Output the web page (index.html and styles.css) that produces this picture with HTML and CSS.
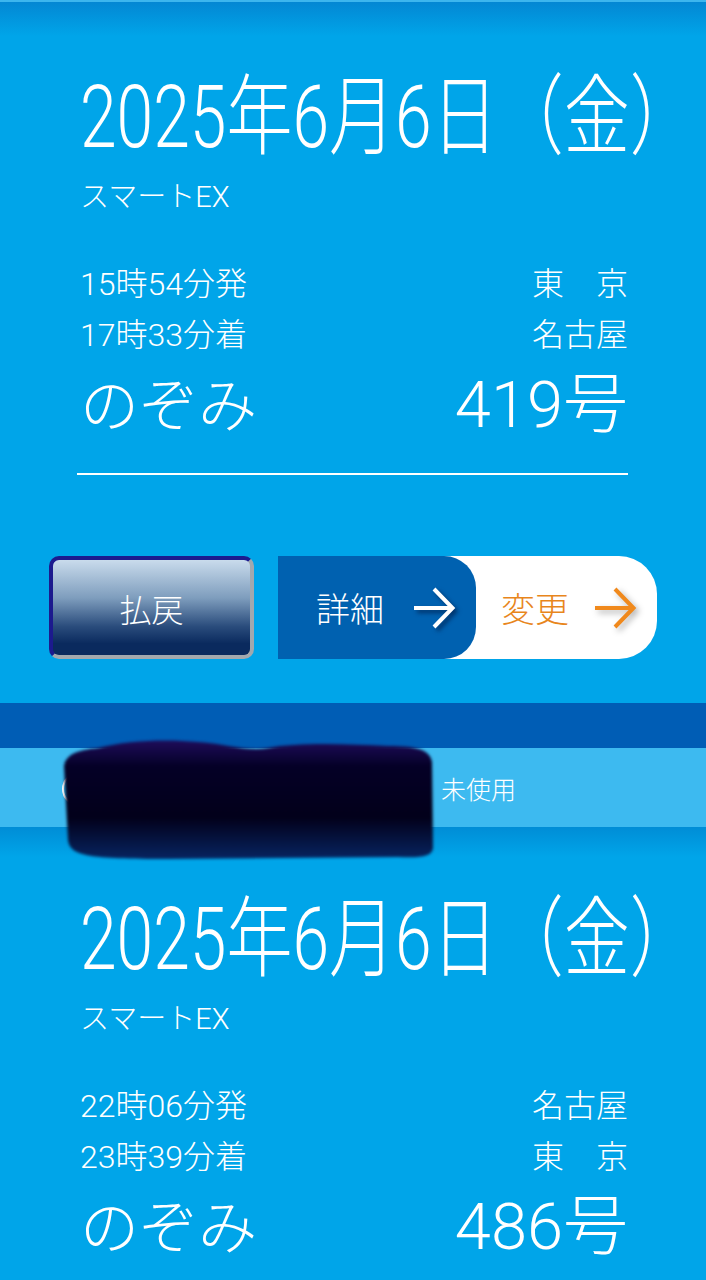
FILE: index.html
```html
<!DOCTYPE html>
<html lang="ja">
<head>
<meta charset="utf-8">
<title>スマートEX</title>
<link rel="stylesheet" href="styles.css">
</head>
<body>
<section class="ticket ticket-first">
  <div class="info">
    <div class="title">2025年6月6日（金）</div>
    <div class="sub">スマートEX</div>
    <div class="rows">
      <div class="row"><span>15時54分発</span><span>東　京</span></div>
      <div class="row"><span>17時33分着</span><span>名古屋</span></div>
    </div>
    <div class="row train"><span class="train-name">のぞみ</span><span>419号</span></div>
    <div class="rule"></div>
  </div>
  <div class="actions">
    <div class="refund">払戻</div>
    <div class="pill">
      <div class="detail"><span>詳細</span>
        <svg class="arrow arrow-white" width="44" height="46" viewBox="0 0 44 46"><path d="M2 23H40M22 4L40.5 23L22 42" fill="none" stroke="#fff" stroke-width="4"/></svg>
      </div>
      <div class="change"><span>変更</span>
        <svg class="arrow arrow-orange" width="44" height="46" viewBox="0 0 44 46"><path d="M2 23H40M22 4L40.5 23L22 42" fill="none" stroke="#f0891c" stroke-width="4"/></svg>
      </div>
    </div>
  </div>
</section>
<div class="band-dark"></div>
<div class="band-status">
  <div class="redacted">
    <span class="icon-ring"></span>
    <svg class="blob" width="380" height="124" viewBox="0 0 380 124">
      <defs>
        <linearGradient id="bg" x1="0" y1="0" x2="0" y2="1">
          <stop offset="0" stop-color="#1e0c5a"/>
          <stop offset="0.22" stop-color="#040026"/>
          <stop offset="0.65" stop-color="#02001a"/>
          <stop offset="1" stop-color="#072460"/>
        </linearGradient>
      </defs>
      <path d="M6 30C8 18 20 14 40 12C70 4 110 3 140 6C170 8 190 16 210 12C240 6 290 8 330 10C360 10 372 14 374 26L375 112C374 121 362 122 340 121L110 123C30 123 12 120 10 104Z" fill="url(#bg)"/>
    </svg>
  </div>
  <span class="status">未使用</span>
</div>
<section class="ticket ticket-second">
  <div class="info">
    <div class="title">2025年6月6日（金）</div>
    <div class="sub">スマートEX</div>
    <div class="rows">
      <div class="row"><span>22時06分発</span><span>名古屋</span></div>
      <div class="row"><span>23時39分着</span><span>東　京</span></div>
    </div>
    <div class="row train"><span class="train-name">のぞみ</span><span>486号</span></div>
  </div>
</section>
</body>
</html>
```
FILE: styles.css
```css
html, body {
  margin: 0;
  padding: 0;
}
body {
  width: 706px;
  height: 1280px;
  overflow: hidden;
  background: #00a5e9;
  color: #fff;
  font-family: Roboto, "Noto Sans CJK JP", sans-serif;
  font-weight: 300;
}
.ticket-first {
  border-top: 2px solid #3cb6ee;
  background: linear-gradient(#0387d3, #00a5e9 34px) no-repeat;
}
.ticket-first .info {
  padding: 72px 0 0 80px;
}
.ticket-second {
  background: linear-gradient(#008dd6, #00a5e9 30px) no-repeat;
}
.ticket-second .info {
  padding: 69px 0 0 80px;
}
.title {
  font-size: 66px;
  line-height: 88px;
  height: 88px;
  white-space: nowrap;
  transform: scaleY(1.333);
}
.sub {
  font-size: 29px;
  line-height: 28px;
  margin-top: 21px;
}
.rows {
  margin-top: 48px;
}
.row {
  display: flex;
  justify-content: space-between;
  align-items: baseline;
  margin-right: 78px;
  font-size: 32px;
  line-height: 51px;
  white-space: nowrap;
}
.train {
  font-size: 65px;
  line-height: 64px;
  margin-top: 12px;
}
.train-name {
  font-size: 59px;
}
.rule {
  height: 2px;
  background: #fff;
  margin: 34px 78px 0 -3px;
}
.actions {
  display: flex;
  height: 103px;
  margin-top: 81px;
  padding-left: 49px;
}
.refund {
  width: 205px;
  height: 103px;
  box-sizing: border-box;
  border: 4px solid;
  border-color: #1c1a8e #a2a8ae #a2a8ae #1c1a8e;
  border-radius: 10px;
  background: linear-gradient(#c9dbec, #7e9dbd 40%, #2a4c7c 70%, #0a2a5e 88%);
  display: flex;
  align-items: center;
  justify-content: center;
  font-size: 32px;
}
.pill {
  margin-left: 24px;
  width: 379px;
  display: flex;
  background: #fff;
  border-radius: 0 38px 38px 0;
}
.detail {
  width: 198px;
  box-sizing: border-box;
  background: #0061b0;
  border-radius: 0 32px 32px 0;
  display: flex;
  align-items: center;
  padding-left: 38px;
  font-size: 34px;
}
.detail .arrow {
  margin-left: 28px;
}
.change {
  display: flex;
  align-items: center;
  padding-left: 25px;
  color: #e8861c;
  font-size: 34px;
}
.change .arrow {
  margin-left: 24px;
}
.arrow-white {
  filter: drop-shadow(3px 3px 2px rgba(0, 20, 60, 0.6));
}
.arrow-orange {
  filter: drop-shadow(3px 3px 3px rgba(0, 0, 0, 0.3));
}
.band-dark {
  height: 45px;
  margin-top: 44px;
  background: #005db5;
}
.band-status {
  height: 79px;
  background: #3dbaf0;
  display: flex;
  align-items: center;
  padding-left: 62px;
  font-size: 25px;
}
.redacted {
  position: relative;
  width: 373px;
  height: 79px;
}
.icon-ring {
  position: absolute;
  left: 0;
  top: 24px;
  width: 30px;
  height: 30px;
  border: 2px solid #fff;
  border-radius: 50%;
}
.blob {
  position: absolute;
  left: -4px;
  top: -12px;
  filter: blur(1.5px);
}
.status {
  margin-left: 6px;
}
```
